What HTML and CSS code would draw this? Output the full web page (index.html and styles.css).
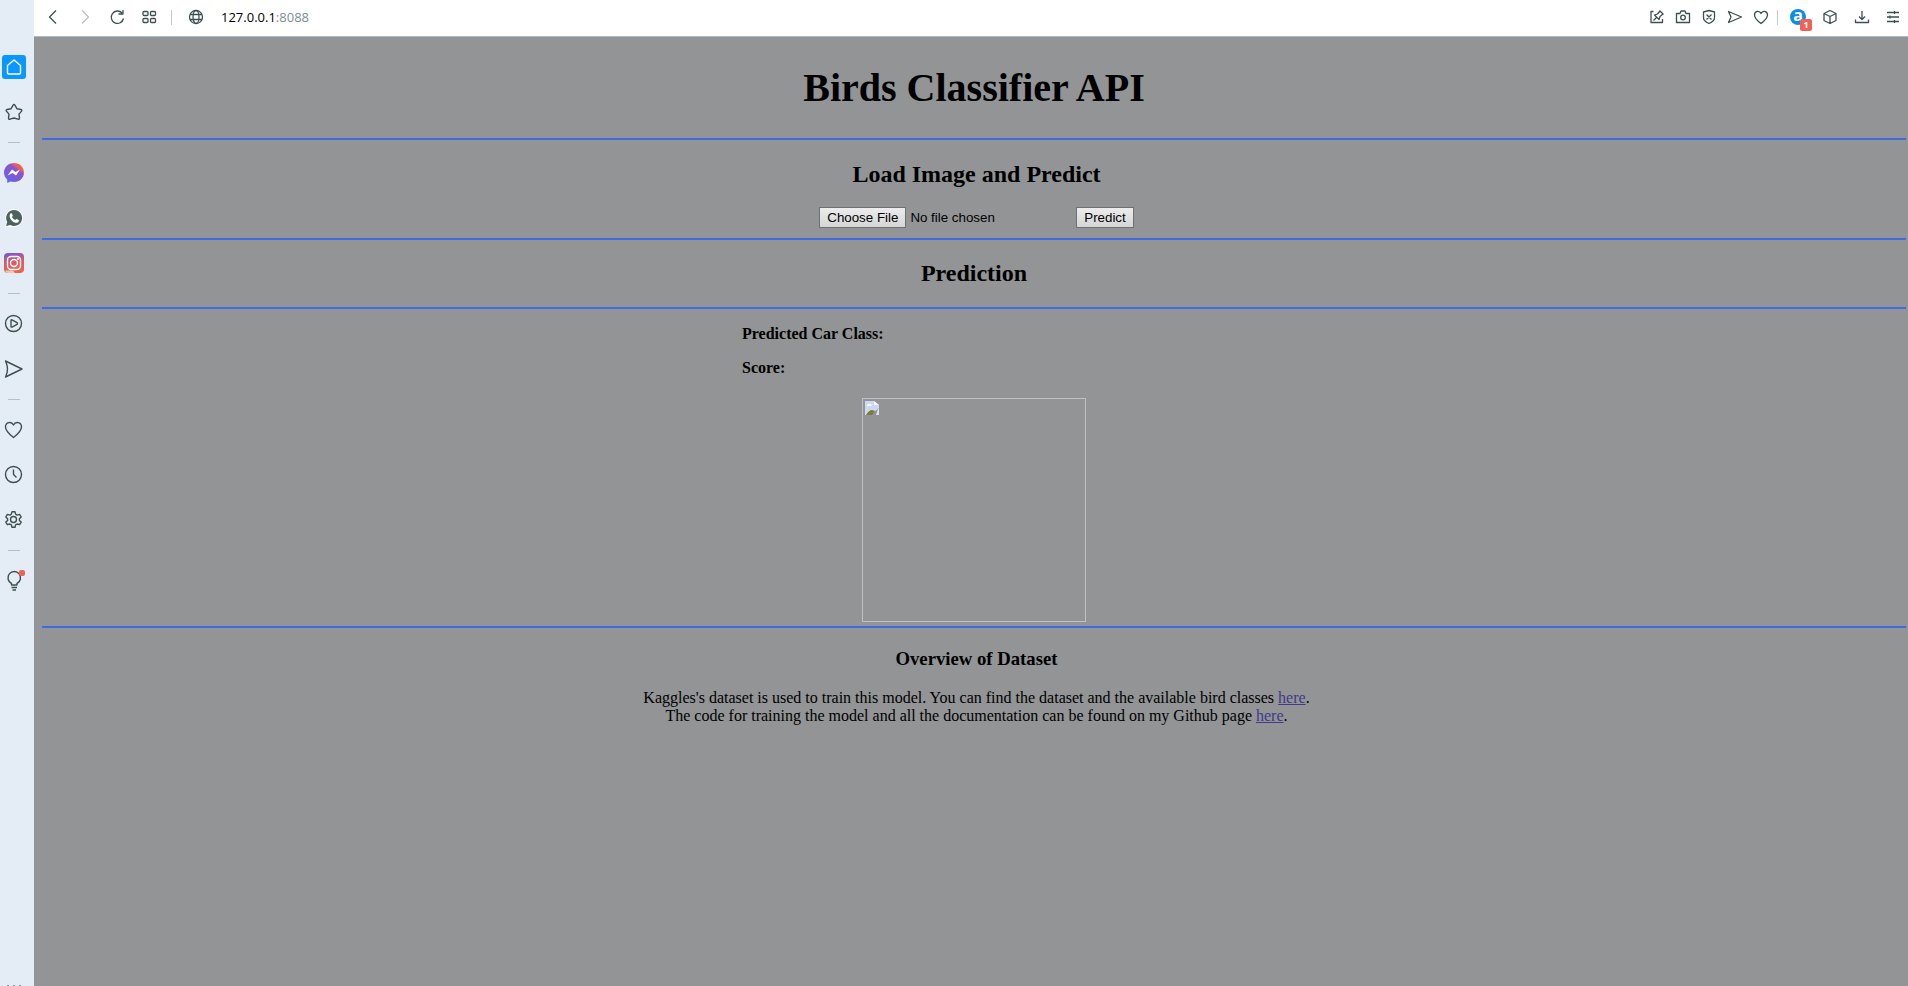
FILE: index.html
```html
<!DOCTYPE html>
<html lang="en">
<head>
<meta charset="utf-8">
<title>Birds Classifier API</title>
<link rel="stylesheet" href="styles.css">
</head>
<body>
<div class="browser">
  <nav class="sidebar" aria-label="Sidebar">
    <button class="side-item side-home" aria-label="Home"><svg class="icon-s" viewBox="0 0 24 24"><path d="M5.500 10.500 12 5l6.500 5.500V18q0 1-1 1h-11q-1 0-1-1z"/></svg></button>
    <button class="side-item" aria-label="Bookmarks"><svg class="icon-s" viewBox="0 0 24 24"><path d="M12 4.500q.6 0 .9.600l2 3.600 4 .8q1.500.5.700 1.600l-2.600 3 .5 4q0 1.500-1.500 1.100L12 18l-4 1.200q-1.500.4-1.500-1.100l.5-4-2.600-3q-.8-1.100.7-1.600l4-.8 2-3.600q.3-.6.9-.6z"/></svg></button>
    <hr class="side-rule">
    <button class="side-item" aria-label="Messenger"><svg class="icon-s" viewBox="0 0 24 24"><defs><linearGradient id="ms" x1="0" y1="1" x2=".8" y2="0"><stop offset="0" stop-color="#0d9dff"/><stop offset=".22" stop-color="#6a62e0"/><stop offset=".72" stop-color="#8a55cc"/><stop offset=".82" stop-color="#ec5f58"/></linearGradient></defs><path class="plain" fill="url(#ms)" d="M12 2C6.300 2 2 6.200 2 11.500c0 2.900 1.200 5.300 3.200 7V22l3.200-1.500c1.100.3 2.300.5 3.600.5 5.700 0 10-4.200 10-9.500S17.700 2 12 2z"/><path class="plain" fill="#fff" d="m5.500 14.500 4.500-6 3.500 2.500 4.500-2.500-4 6-3.500-2.500z"/></svg></button>
    <button class="side-item" aria-label="WhatsApp"><svg class="icon-s" viewBox="0 0 24 24"><path class="plain" fill="#fff" d="M12 3a9 9 0 0 1 0 18H3l1.500-4.500A9 9 0 0 1 12 3z"/><path class="plain" fill="#4b625f" d="M12 4a8 8 0 1 1-3.800 15L4 20l1.200-4A8 8 0 0 1 12 4z"/><path class="plain" fill="#fff" d="M8.500 7.500c.7-.5 1.400-.2 1.700.6l.5 1.300c.2.600-.7 1.200-.7 1.600.8 1.500 2 2.500 3.300 3 .5 0 .9-1.100 1.500-.9l1.800.9c.8.500.1 2.300-1.300 2.700-3.500.8-8-3.600-7.700-7 .1-.9.400-1.700.9-2.200z"/></svg></button>
    <button class="side-item" aria-label="Instagram"><svg class="icon-s" viewBox="0 0 24 24"><defs><linearGradient id="ig" x1=".4" y1="0" x2=".6" y2="1"><stop offset="0" stop-color="#7857d8"/><stop offset=".4" stop-color="#d8586a"/><stop offset="1" stop-color="#f0624c"/></linearGradient></defs><rect class="plain" x="2" y="2" width="20" height="20" rx="4" fill="url(#ig)"/><path class="plain" fill="#f1c9a8" d="M3 19.500h8l2 2.500H6q-2 0-3-2.500z"/><g class="white-line"><rect x="5.500" y="5.500" width="13" height="13" rx="3.500"/><circle cx="12" cy="12" r="3.500"/></g><circle class="plain" cx="16" cy="8" r="1" fill="#fff"/></svg></button>
    <hr class="side-rule">
    <button class="side-item" aria-label="Player"><svg class="icon-s" viewBox="0 0 24 24"><circle cx="11.500" cy="11.500" r="8"/><path d="M9 8.500q0-1 1-.6l5 2.700q1 .9 0 1.800l-5 2.700q-1 .3-1-.6z"/></svg></button>
    <button class="side-item" aria-label="My Flow"><svg class="icon-s" viewBox="0 0 24 24"><path d="m3.500 4 16.500 8-16.500 8q4-8 0-16z"/></svg></button>
    <hr class="side-rule">
    <button class="side-item" aria-label="Favourites"><svg class="icon-s" viewBox="0 0 24 24"><path d="M11.500 19.500C7 16 3.500 12.800 3.500 9c0-5 6-6 8-2 2-4 8-3 8 2 0 3.800-3.500 7-8 10.500z"/></svg></button>
    <button class="side-item" aria-label="History"><svg class="icon-s" viewBox="0 0 24 24"><circle cx="11.500" cy="11.500" r="8"/><path d="M11.500 6.500v5l3 3"/></svg></button>
    <button class="side-item" aria-label="Settings"><svg class="icon-s" viewBox="0 0 24 24"><path d="M10 3.800h3l.6 2.400 1.600.9 2.400-.7 1.600 2.600-1.800 1.700v1.700l1.800 1.700-1.600 2.600-2.400-.7-1.600.9-.6 2.400h-3l-.6-2.400-1.600-.9-2.400.7-1.600-2.600 1.800-1.700v-1.700L3.800 9l1.600-2.600 2.400.7 1.600-.9z"/><circle cx="11.500" cy="11.500" r="3"/></svg></button>
    <hr class="side-rule">
    <button class="side-item" aria-label="Tips"><svg class="icon-s" viewBox="0 0 24 24"><path d="M9.500 16v-1.500a6.300 6.300 0 1 1 5.500 0V16zM9.500 18.500h5.500M10.500 21h3.500"/><rect class="plain" x="17" y="1" width="6" height="6" rx="2" fill="#ed6355"/></svg></button>
    <button class="side-more" aria-label="More"><i></i><i></i><i></i></button>
  </nav>
  <div class="main">
    <header class="toolbar">
      <button class="tool" aria-label="Back"><svg class="icon" viewBox="0 0 18 18"><path d="m12 2.500-6.500 6.500 6.500 6.500"/></svg></button>
      <button class="tool faded" aria-label="Forward" disabled><svg class="icon" viewBox="0 0 18 18"><path d="m6 2.500 6.500 6.500-6.500 6.500"/></svg></button>
      <button class="tool" aria-label="Reload"><svg class="icon" viewBox="0 0 18 18"><path d="M14 5a6.200 6.200 0 1 0 1.500 5.500M10.500 6H15V2"/></svg></button>
      <button class="tool" aria-label="Speed dial"><svg class="icon" viewBox="0 0 18 18"><rect x="3" y="3.500" width="5" height="4" rx="1"/><rect x="10.500" y="3.500" width="5" height="4" rx="1"/><rect x="3" y="10.500" width="5" height="4" rx="1"/><rect x="10.500" y="10.500" width="5" height="4" rx="1"/></svg></button>
      <span class="divider"></span>
      <button class="tool site" aria-label="Site information"><svg class="icon" viewBox="0 0 18 18"><circle cx="9" cy="9" r="6.500"/><ellipse cx="9" cy="9" rx="3" ry="6.500"/><path d="M3 6.500h12M3 11.500h12"/></svg></button>
      <span class="address">127.0.0.1<span class="port">:8088</span></span>
      <div class="actions">
        <button class="tool" aria-label="Pin page"><svg class="icon" viewBox="0 0 18 18"><path d="M5.500 3.500H3v11h11.500V11M5.500 12.500l3-3M6.500 7l4.500 4.500 1-3L15 6l-3-3-2.500 3zM11.500 2.500l4 4"/></svg></button>
        <button class="tool" aria-label="Snapshot"><svg class="icon" viewBox="0 0 18 18"><path d="M2.500 5.500H6l1-2.500h4l1 2.500h3.500v9h-13z"/><circle cx="9" cy="9.500" r="2.300"/></svg></button>
        <button class="tool" aria-label="Ad blocker"><svg class="icon" viewBox="0 0 18 18"><path d="M9 2.500 14.500 4v6q0 3-5.500 5.500Q3.500 13 3.500 10V4zM6.500 6.500l5 5M11.500 6.500l-5 5"/></svg></button>
        <button class="tool" aria-label="Send to flow"><svg class="icon" viewBox="0 0 18 18"><path d="m2.500 3.500 13 5.500-13 5.500 2.500-5.500z"/></svg></button>
        <button class="tool" aria-label="Save page"><svg class="icon" viewBox="0 0 18 18"><path d="M9 15.500C5 12.500 2.500 10 2.500 7c0-4 5-5 6.500-1.500C10.500 2 15.500 3 15.500 7c0 3-2.500 5.500-6.500 8.500z"/></svg></button>
        <span class="divider"></span>
        <button class="tool ext" aria-label="Extension, 1 notification"><span class="ext-logo">a</span><span class="badge">1</span></button>
        <button class="tool wide" aria-label="Extensions"><svg class="icon" viewBox="0 0 18 18"><path d="m9 2.500 6 3v7l-6 3-6-3v-7zM3 5.500l6 3 6-3M9 8.500v7"/></svg></button>
        <button class="tool wide" aria-label="Downloads"><svg class="icon" viewBox="0 0 18 18"><path d="M9 3v8M6 8.500l3 3 3-3M2.500 11.500v3h13v-3"/></svg></button>
        <button class="tool last" aria-label="Easy setup"><svg class="icon" viewBox="0 0 18 18"><path d="M3 4.500h12M3 9h12M3 13.500h12M10.500 3v3M6 7.500v3M10.500 12v3"/></svg></button>
      </div>
    </header>
    <main class="page">
      <section class="block title-block"><h1 class="title">Birds Classifier API</h1></section>
      <section class="block shifted">
        <h2 class="heading">Load Image and Predict</h2>
        <form class="upload" onsubmit="return false">
          <input class="file" type="file" aria-label="Image file">
          <button class="predict" type="submit">Predict</button>
        </form>
      </section>
      <section class="block prediction-block"><h2 class="heading">Prediction</h2></section>
      <section class="block result-block">
        <div class="result">
          <p class="field">Predicted Car Class:</p>
          <p class="field">Score:</p>
        </div>
        <div class="preview" role="img" aria-label="Missing image"><svg class="missing" viewBox="0 0 16 16"><path fill="#cdd8f7" d="M1 1h9l5 4v3l-5 4-3 3H1z"/><path fill="#f7f9ff" d="M10 1l5 4h-5zM3 5q1-2 3-1 2 0 2 2H3z"/><path fill="#7c7b3b" d="M2 15q3-5 6-5l3 1-3 4z"/><path fill="#dde3f8" d="m14 9 1-.5V15h-3z"/></svg></div>
      </section>
      <section class="overview shifted">
        <h3 class="subheading">Overview of Dataset</h3>
        <p class="text">Kaggles's dataset is used to train this model. You can find the dataset and the available bird classes <a href="#dataset">here</a>.<br>The code for training the model and all the documentation can be found on my Github page <a href="#code">here</a>.</p>
      </section>
    </main>
  </div>
</div>
</body>
</html>
```

FILE: styles.css
```css
* { box-sizing: border-box; }

body { margin: 0; font-family: "Liberation Serif", "Times New Roman", serif; color: #000; }

.browser { display: flex; min-height: 100vh; }

button { font: inherit; }

/* Sidebar */
.sidebar {
  flex: none;
  width: 34px;
  padding: 34px 0 0 2px;
  display: flex;
  flex-direction: column;
  background: #e4edf5;
}
.side-item {
  width: 24px;
  height: 24px;
  margin-top: 21px;
  padding: 0;
  border: 0;
  border-radius: 3px;
  background: none;
}
.side-home { background: #0a97ff; }
.side-rule { width: 12px; height: 1px; margin: 18px 0 0 6px; border: 0; background: #b4bfd0; }
.side-rule + .side-item { margin-top: 18px; }
.side-more {
  display: flex;
  gap: 4px;
  margin-top: auto;
  padding: 0 0 0 5px;
  border: 0;
  background: none;
}
.side-more i { width: 2px; height: 1px; background: #8b93a0; }

.icon-s, .icon { display: block; fill: none; stroke: #3d504f; stroke-width: 1.4; stroke-linejoin: round; }
.icon-s { width: 24px; height: 24px; }
.icon { width: 18px; height: 18px; stroke-width: 1.3; }
.side-home .icon-s, .white-line { stroke: #fff; }
.plain { stroke: none; }

/* Toolbar */
.main { flex: 1; min-width: 0; display: flex; flex-direction: column; }
.toolbar {
  height: 37px;
  padding: 0 0 2px 3px;
  display: flex;
  align-items: center;
  background: #fff;
  border-bottom: 1px solid #a9bac8;
}
.tool {
  width: 32px;
  height: 24px;
  padding: 0;
  display: flex;
  align-items: center;
  justify-content: center;
  border: 0;
  background: none;
}
.faded { opacity: 0.35; }
.divider { width: 1px; height: 15px; margin: 0 6px; background: #c4c8cc; }
.site { width: 36px; }
.address { margin-left: 7px; font: 13px/18px "Open Sans", "Noto Sans", sans-serif; }
.port { color: #7b8f92; }
.actions { margin-left: auto; display: flex; align-items: center; }
.actions .tool { width: 26px; }
.actions .divider { margin: 0 4px 0 3px; }
.actions .wide { width: 32px; }
.actions .last { width: 30px; }
.actions .ext { position: relative; width: 32px; }
.ext-logo {
  width: 16px;
  height: 16px;
  border-radius: 8px;
  background: #0b8ee8;
  color: #fff;
  font: bold 16px/13px "Open Sans", sans-serif;
}
.badge {
  position: absolute;
  left: 18px;
  top: 14px;
  width: 12px;
  height: 12px;
  border-radius: 2px;
  background: #ed6355;
  color: #fff;
  font: bold 9px/12px "Open Sans", sans-serif;
}

/* Page */
.page { flex: 1; padding: 0 2px 0 8px; background: #929495; text-align: center; }
.block { border-bottom: 2px solid #4169e1; }
.shifted { padding-left: 5px; }

.title-block { padding: 28px 0 27px; }
.title { margin: 0; font-size: 40px; line-height: 46px; }

.heading { margin: 0; padding-top: 20px; font-size: 24px; line-height: 28px; }
.upload { display: flex; justify-content: center; gap: 4px; padding: 19px 0 10px; }
.file { width: 253px; height: 21px; font: 13.333px "Liberation Sans", Arial, sans-serif; }
.file::file-selector-button, .predict {
  height: 21px;
  padding: 0 7px;
  border: 1px solid #6f7070;
  border-radius: 0;
  background: linear-gradient(#ececec, #d4d6d6);
  color: #000;
  font: 13.333px "Liberation Sans", Arial, sans-serif;
}
.file::file-selector-button { margin-right: 4px; }

.prediction-block { padding-bottom: 20px; }
.prediction-block .heading { padding-top: 19px; }

.result-block { padding-bottom: 4px; }
.result { width: 464px; max-width: 100%; margin: 0 auto; padding-top: 16px; text-align: left; }
.field { margin: 0 0 16px; font-size: 16px; font-weight: bold; line-height: 18px; }
.preview { width: 224px; height: 224px; margin: 21px auto 0; padding: 1px; border: 1px solid #c0c0c0; }
.missing { display: block; width: 16px; height: 16px; }

.overview { padding-top: 20px; }
.subheading { margin: 0 0 19px; line-height: 22px; }
.text { margin: 0; font-size: 16px; line-height: 18px; }
.text a { color: #403a8c; }
```
